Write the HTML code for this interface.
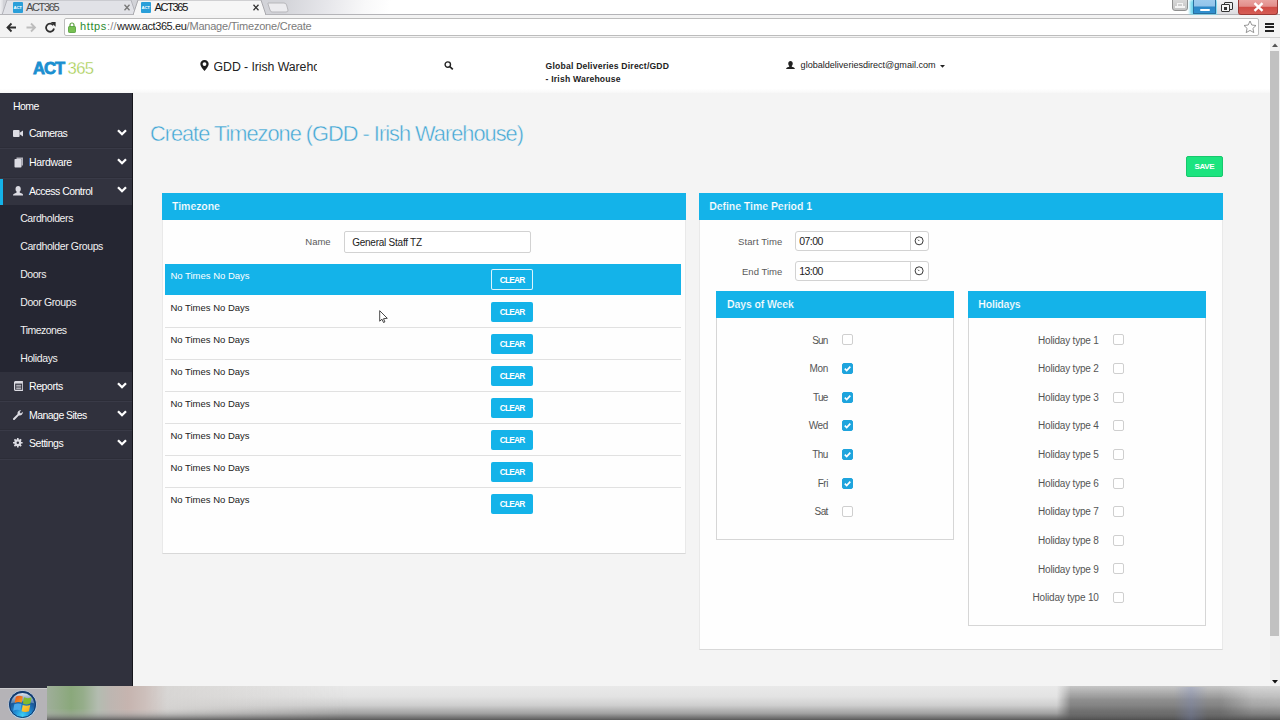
<!DOCTYPE html>
<html><head><meta charset="utf-8"><title>ACT365</title>
<style>
*{box-sizing:border-box;margin:0;padding:0}
html,body{width:1280px;height:720px;overflow:hidden;background:#f4f4f4;font-family:"Liberation Sans",sans-serif;color:#333}
div,span{white-space:nowrap}
.a,.t,svg{position:absolute}
.t{white-space:pre}
.panel{background:#fefefe;border:1px solid #e9e9e9;border-bottom-color:#d8d8d8}
.panel.in{border-color:#d6d6d6}
.ph{background:#14b3e9}
.inp{background:#fff;border:1px solid #d2d2d2;border-radius:2px}
.row{left:165px;width:516px;height:32px;border-bottom:1px solid #e1e1e1}
.clr{left:491px;width:42px;height:20px;background:#14b3e9;border-radius:2px}
.cb{width:11px;height:11px;border:1px solid #cfcfcf;border-radius:2px;background:#fff}
.cb.on{background:#1ea4dd;border-color:#1ea4dd}
.sep{left:0;width:132px;height:1px;background:#393a47;border-top:1px solid #2c2d38;height:2px}
</style></head><body>
<div class="a" style="left:0;top:0;width:1280px;height:15px;background:linear-gradient(100deg,#d2d3d8 0,#d2d3d8 22%,#e6e6ea 25.5%,#f8f8f9 28.5%,#fff 30.5%)"></div>
<div class="a" style="left:0;top:0;width:3px;height:14px;background:linear-gradient(90deg,#efeff2,#dcdde1)"></div>
<svg style="left:0;top:0" width="300" height="15" viewBox="0 0 300 15"><path d="M2 15 L7 0 L131 0 L136 15Z" fill="#e1e2e7" stroke="#b3b4ba" stroke-width="1"/><path d="M133 15 L138 0 L261 0 L266 15Z" fill="#f6f6f6" stroke="#a9a9ad" stroke-width="1"/><path d="M268 3 L284 3 Q286 3 286.6 5 L288 10 Q288.5 12 286 12 L272 12 Q270.5 12 270 10 L268 4Z" fill="#ececef" stroke="#b7b7bb" stroke-width="1"/></svg>
<div class="a" style="left:0;top:14px;width:1280px;height:1px;background:#b4b4b8"></div>
<div class="a" style="left:134px;top:14px;width:131px;height:1px;background:#f6f6f6"></div>
<div class="a" style="left:13px;top:2px;width:10px;height:10.5px;background:#2a9fd9;border-radius:1px"></div>
<div class="a" style="left:141px;top:2px;width:10px;height:10.5px;background:#2a9fd9;border-radius:1px"></div>
<svg style="left:124px;top:4px" width="6" height="7" viewBox="0 0 6 7"><path d="M0.5 0.8 L5.5 6.2 M5.5 0.8 L0.5 6.2" stroke="#777" stroke-width="1.3" fill="none"/></svg>
<svg style="left:252.5px;top:4px" width="6" height="7" viewBox="0 0 6 7"><path d="M0.5 0.8 L5.5 6.2 M5.5 0.8 L0.5 6.2" stroke="#333" stroke-width="1.3" fill="none"/></svg>
<div class="a" style="left:1172px;top:-3px;width:16px;height:14px;background:linear-gradient(#dcdcdc,#c4c4c4);border:1px solid #8f8f8f;border-radius:3px"></div>
<div class="a" style="left:1177px;top:3px;width:6px;height:3px;border:1px solid #f4f4f4;border-bottom:none"></div><div class="a" style="left:1175px;top:6px;width:10px;height:2px;background:#f4f4f4"></div>
<div class="a" style="left:1190px;top:0;width:28px;height:15px;background:#6fd6ee;filter:blur(1.5px)"></div>
<div class="a" style="left:1193px;top:0;width:23px;height:14px;background:linear-gradient(#9ccbee 0,#93c4ea 48%,#2c86c6 52%,#2f90cf 100%);border:1px solid #2a6f9f;border-top:none"></div>
<div class="a" style="left:1200px;top:8.5px;width:10px;height:2.5px;background:#fff;border-radius:1px"></div>
<div class="a" style="left:1217px;top:0;width:21px;height:14px;background:linear-gradient(#f2f2f4,#dcdce0)"></div>
<div class="a" style="left:1224px;top:1.5px;width:9px;height:8px;border:1.2px solid #333;background:#eee;border-radius:1px"></div><div class="a" style="left:1221px;top:4px;width:9px;height:8px;border:1.2px solid #333;background:#f4f4f4;border-radius:1px"></div><div class="a" style="left:1224px;top:7px;width:3px;height:2.5px;background:#333"></div>
<div class="a" style="left:1238px;top:0;width:40px;height:14.5px;background:linear-gradient(#e9a3a0 0,#e28d8a 45%,#cf4b45 52%,#d65d55 100%);border:1px solid #9b3a36;border-top:none;border-radius:0 0 3px 3px"></div>
<svg style="left:1253px;top:2px" width="11" height="10" viewBox="0 0 11 10"><path d="M1.5 1.2 L9.5 8.8 M9.5 1.2 L1.5 8.8" stroke="#fff" stroke-width="2.4" fill="none"/></svg>
<div class="a" style="left:0;top:15px;width:1280px;height:23px;background:#f3f3f3;border-bottom:1px solid #d0d0d0"></div>
<div class="a" style="left:63.5px;top:18px;width:1195px;height:17.5px;background:#fff;border:1px solid #bcbcbc;border-radius:2px"></div>
<svg style="left:6px;top:22px" width="52" height="11" viewBox="0 0 52 11"><path d="M10 5.5 L2 5.5 M5.5 1.5 L1.5 5.5 L5.5 9.5" stroke="#2f2f2f" stroke-width="1.8" fill="none"/><path d="M20.5 5.5 L28.5 5.5 M25 1.5 L29 5.5 L25 9.5" stroke="#bdbdbd" stroke-width="1.8" fill="none"/><path d="M47.2 3.2 A4 4 0 1 0 48 6.5" stroke="#2f2f2f" stroke-width="1.8" fill="none"/><path d="M44.8 0 L49.6 0 L49.6 4.8Z" fill="#2f2f2f"/></svg>
<svg style="left:68px;top:21.5px" width="8" height="11" viewBox="0 0 8 11"><path d="M2 5 V3 A2 2 0 0 1 6 3 V5" stroke="#5fa145" stroke-width="1.2" fill="none"/><rect x="0.5" y="4.5" width="7" height="6" rx="0.8" fill="#77c152" stroke="#4f9a37" stroke-width="0.8"/></svg>
<svg style="left:1243px;top:20px" width="14" height="14" viewBox="0 0 14 14"><path d="M7 1 L8.8 5 L13 5.5 L9.9 8.4 L10.8 12.6 L7 10.4 L3.2 12.6 L4.1 8.4 L1 5.5 L5.2 5Z" fill="#fff" stroke="#8a8a8a" stroke-width="0.9"/></svg>
<div class="a" style="left:1265px;top:22.5px;width:8.5px;height:2px;background:#222"></div><div class="a" style="left:1265px;top:26px;width:8.5px;height:2px;background:#222"></div><div class="a" style="left:1265px;top:29.5px;width:8.5px;height:2px;background:#222"></div>
<div class="a" style="left:0;top:38px;width:1270px;height:55px;background:linear-gradient(180deg,#fff 0,#fff 92%,#f7f7f7 100%)"></div>
<div class="a" style="left:1269.5px;top:38px;width:10.5px;height:648px;background:#f1f1f1"></div>
<div class="a" style="left:1270.3px;top:51px;width:8.5px;height:585px;background:#c1c1c1"></div>
<svg style="left:1272px;top:43px" width="6" height="4" viewBox="0 0 6 4"><path d="M0 4 L3 0.5 L6 4Z" fill="#555"/></svg>
<svg style="left:1272px;top:680.3px" width="6" height="3.5" viewBox="0 0 6 3.5"><path d="M0 0 L3 3.5 L6 0Z" fill="#111"/></svg>
<svg style="left:200.3px;top:60.3px" width="9" height="11" viewBox="0 0 9 11"><path d="M4.5 0 C2 0 0.3 1.8 0.3 4 C0.3 6.5 3 9 4.5 11 C6 9 8.7 6.5 8.7 4 C8.7 1.8 7 0 4.5 0Z M4.5 2.2 A1.9 1.9 0 1 1 4.5 6 A1.9 1.9 0 1 1 4.5 2.2Z" fill="#1d1d1d" fill-rule="evenodd"/></svg>
<svg style="left:443.6px;top:61px" width="10" height="9" viewBox="0 0 10 9"><circle cx="3.8" cy="3.6" r="2.7" stroke="#222" stroke-width="1.4" fill="none"/><path d="M5.8 5.6 L8.8 8.3" stroke="#222" stroke-width="1.7"/></svg>
<svg style="left:786.2px;top:60.6px" width="9" height="8.2" viewBox="0 0 8.6 8"><path d="M4.3 0 c-1.3 0 -2.2 1 -2.2 2.4 c0 1 .4 1.9 1 2.4 c0 .6 -.2 .9 -.8 1.1 c-1.400 .5 -2.3 .9 -2.3 2.100 h8.600 c0 -1.200 -.9 -1.600 -2.300 -2.100 c-.6 -.2 -.8 -.5 -.8 -1.100 c.6 -.5 1 -1.400 1 -2.400 c0 -1.400 -.9 -2.400 -2.200 -2.400z" fill="#222"/></svg>
<svg style="left:940.2px;top:65.2px" width="5" height="3" viewBox="0 0 5 3"><path d="M0 0 L5 0 L2.5 2.8Z" fill="#222"/></svg>
<div class="a" style="left:0;top:93px;width:133px;height:593px;background:#30313d;border-right:1px solid #16161c"></div>
<div class="a" style="left:0;top:178px;width:132px;height:27px;background:#32333f"></div>
<div class="a" style="left:0;top:205px;width:132px;height:167px;background:#252632"></div>
<div class="a" style="left:0;top:178px;width:3.3px;height:26.5px;background:#14b3e9"></div>
<div class="a sep" style="top:146.5px"></div>
<div class="a sep" style="top:177px"></div>
<div class="a sep" style="top:400px"></div>
<div class="a sep" style="top:428.5px"></div>
<div class="a sep" style="top:457.5px"></div>
<svg style="left:116.8px;top:128.9px" width="10" height="7" viewBox="0 0 10 7"><path d="M1 1.2 L5 5.2 L9 1.2" stroke="#fff" stroke-width="2.3" fill="none"/></svg>
<svg style="left:116.8px;top:157.8px" width="10" height="7" viewBox="0 0 10 7"><path d="M1 1.2 L5 5.2 L9 1.2" stroke="#fff" stroke-width="2.3" fill="none"/></svg>
<svg style="left:116.8px;top:186.2px" width="10" height="7" viewBox="0 0 10 7"><path d="M1 1.2 L5 5.2 L9 1.2" stroke="#fff" stroke-width="2.3" fill="none"/></svg>
<svg style="left:116.8px;top:381.5px" width="10" height="7" viewBox="0 0 10 7"><path d="M1 1.2 L5 5.2 L9 1.2" stroke="#fff" stroke-width="2.3" fill="none"/></svg>
<svg style="left:116.8px;top:410px" width="10" height="7" viewBox="0 0 10 7"><path d="M1 1.2 L5 5.2 L9 1.2" stroke="#fff" stroke-width="2.3" fill="none"/></svg>
<svg style="left:116.8px;top:438.5px" width="10" height="7" viewBox="0 0 10 7"><path d="M1 1.2 L5 5.2 L9 1.2" stroke="#fff" stroke-width="2.3" fill="none"/></svg>
<svg style="left:12.900px;top:130px" width="10" height="7" viewBox="0 0 10 7"><rect x="0" y="0" width="6.600" height="7" rx="0.900" fill="#dcdce3"/><path d="M6.600 2.800 L10 0.600 L10 6.400 L6.600 4.200Z" fill="#dcdce3"/></svg>
<svg style="left:13.5px;top:156.5px" width="10" height="11" viewBox="0 0 10 11"><path d="M2.5 0.5 H9 V8.5 H7.5 V2 H2.5Z" fill="#dcdce3" opacity=".75"/><rect x="0.5" y="2" width="7" height="8.5" rx="0.8" fill="#dcdce3"/></svg>
<svg style="left:13px;top:186px" width="10.3" height="9.6" viewBox="0 0 8.6 8"><path d="M4.3 0 c-1.3 0 -2.2 1 -2.2 2.4 c0 1 .4 1.9 1 2.4 c0 .6 -.2 .9 -.8 1.1 c-1.400 .5 -2.3 .9 -2.3 2.100 h8.600 c0 -1.200 -.9 -1.600 -2.300 -2.100 c-.6 -.2 -.8 -.5 -.8 -1.100 c.6 -.5 1 -1.400 1 -2.400 c0 -1.400 -.9 -2.400 -2.200 -2.400z" fill="#dcdce3"/></svg>
<svg style="left:13.700px;top:380.900px" width="9.400" height="10" viewBox="0 0 9.400 10"><rect x="0.600" y="0.600" width="8.200" height="8.800" rx="0.700" fill="none" stroke="#dcdce3" stroke-width="1.200"/><path d="M1 1.800 H8.400" stroke="#dcdce3" stroke-width="1.600"/><path d="M2.200 4.300 H7.200 M2.200 6 H7.200 M2.200 7.700 H7.200" stroke="#dcdce3" stroke-width="0.900"/></svg>
<svg style="left:13px;top:409.5px" width="10" height="10" viewBox="0 0 10 10"><path d="M1 9 L5.6 4.4" stroke="#dcdce3" stroke-width="2" stroke-linecap="round"/><path d="M9.600 1.800 L7.900 3.500 L6.500 2.100 L8.200 .4 A2.900 2.900 0 0 0 4.700 4.200 A2.900 2.900 0 0 0 5.800 5.300 A2.900 2.900 0 0 0 9.600 1.800Z" fill="#dcdce3"/></svg>
<svg style="left:13.2px;top:438.3px" width="9.6" height="9.6" viewBox="0 0 10 10"><circle cx="5" cy="5" r="2.6" fill="none" stroke="#dcdce3" stroke-width="2"/><path d="M5 0 V10 M0 5 H10 M1.5 1.500 L8.500 8.500 M8.500 1.500 L1.500 8.500" stroke="#dcdce3" stroke-width="1.700"/><circle cx="5" cy="5" r="1.300" fill="#30313d"/></svg>
<div class="a" style="left:1186px;top:156px;width:37px;height:20.5px;background:#1be47f;border:1px solid #17c86d;border-radius:2px"></div>
<div class="a panel" style="left:162px;top:193px;width:523.5px;height:360.5px"></div>
<div class="a ph" style="left:162px;top:193px;width:523.5px;height:26.5px"></div>
<div class="a inp" style="left:344px;top:231px;width:187px;height:22px"></div>
<div class="a row" style="top:264px;height:31.2px;background:#14b3e9;border:none"></div>
<div class="a clr" style="top:269px;height:20.5px;border:1px solid rgba(255,255,255,.85)"></div>
<div class="a row" style="top:296px"></div>
<div class="a clr" style="top:301.5px"></div>
<div class="a row" style="top:328px"></div>
<div class="a clr" style="top:333.5px"></div>
<div class="a row" style="top:360px"></div>
<div class="a clr" style="top:365.5px"></div>
<div class="a row" style="top:392px"></div>
<div class="a clr" style="top:397.5px"></div>
<div class="a row" style="top:424px"></div>
<div class="a clr" style="top:429.5px"></div>
<div class="a row" style="top:456px"></div>
<div class="a clr" style="top:461.5px"></div>
<div class="a row" style="top:488px;border:none"></div>
<div class="a clr" style="top:493.5px"></div>
<div class="a panel" style="left:699px;top:193px;width:524px;height:457px"></div>
<div class="a ph" style="left:699px;top:193px;width:524px;height:26.5px"></div>
<div class="a inp" style="left:795px;top:231px;width:133.5px;height:19.5px;border-radius:3px"></div>
<div class="a" style="left:910px;top:232px;width:1px;height:17.5px;background:#d2d2d2"></div>
<svg style="left:914px;top:235.6px" width="10" height="10" viewBox="0 0 10 10"><circle cx="5.100" cy="4.800" r="4" fill="none" stroke="#222" stroke-width="0.900"/><path d="M5.300 5 L4 3.700" stroke="#444" stroke-width="1" fill="none"/></svg>
<div class="a inp" style="left:795px;top:261px;width:133.5px;height:19.5px;border-radius:3px"></div>
<div class="a" style="left:910px;top:262px;width:1px;height:17.5px;background:#d2d2d2"></div>
<svg style="left:914px;top:265.6px" width="10" height="10" viewBox="0 0 10 10"><circle cx="5.100" cy="4.800" r="4" fill="none" stroke="#222" stroke-width="0.900"/><path d="M5.300 5 L4 3.700" stroke="#444" stroke-width="1" fill="none"/></svg>
<div class="a panel in" style="left:716px;top:291px;width:238px;height:248.5px"></div>
<div class="a ph" style="left:716px;top:291px;width:238px;height:26.5px"></div>
<div class="a panel in" style="left:967.5px;top:291px;width:238.5px;height:334.5px"></div>
<div class="a ph" style="left:967.5px;top:291px;width:238.5px;height:26.5px"></div>
<div class="a cb" style="left:842px;top:334.3px"></div>
<div class="a cb on" style="left:842px;top:362.9px"></div>
<svg style="left:842px;top:362.9px" width="11" height="11" viewBox="0 0 11 11"><path d="M2.8 5.600 L4.700 7.500 L8.300 3.600" stroke="#fff" stroke-width="1.700" fill="none"/></svg>
<div class="a cb on" style="left:842px;top:391.59999999999997px"></div>
<svg style="left:842px;top:391.59999999999997px" width="11" height="11" viewBox="0 0 11 11"><path d="M2.8 5.600 L4.700 7.500 L8.300 3.600" stroke="#fff" stroke-width="1.700" fill="none"/></svg>
<div class="a cb on" style="left:842px;top:420.2px"></div>
<svg style="left:842px;top:420.2px" width="11" height="11" viewBox="0 0 11 11"><path d="M2.8 5.600 L4.700 7.500 L8.300 3.600" stroke="#fff" stroke-width="1.700" fill="none"/></svg>
<div class="a cb on" style="left:842px;top:448.9px"></div>
<svg style="left:842px;top:448.9px" width="11" height="11" viewBox="0 0 11 11"><path d="M2.8 5.600 L4.700 7.500 L8.300 3.600" stroke="#fff" stroke-width="1.700" fill="none"/></svg>
<div class="a cb on" style="left:842px;top:477.5px"></div>
<svg style="left:842px;top:477.5px" width="11" height="11" viewBox="0 0 11 11"><path d="M2.8 5.600 L4.700 7.500 L8.300 3.600" stroke="#fff" stroke-width="1.700" fill="none"/></svg>
<div class="a cb" style="left:842px;top:506.09999999999997px"></div>
<div class="a cb" style="left:1112.7px;top:334.3px"></div>
<div class="a cb" style="left:1112.7px;top:362.9px"></div>
<div class="a cb" style="left:1112.7px;top:391.59999999999997px"></div>
<div class="a cb" style="left:1112.7px;top:420.2px"></div>
<div class="a cb" style="left:1112.7px;top:448.9px"></div>
<div class="a cb" style="left:1112.7px;top:477.5px"></div>
<div class="a cb" style="left:1112.7px;top:506.09999999999997px"></div>
<div class="a cb" style="left:1112.7px;top:534.7px"></div>
<div class="a cb" style="left:1112.7px;top:563.4000000000001px"></div>
<div class="a cb" style="left:1112.7px;top:592.0px"></div>
<div class="a" style="left:0;top:685.7px;width:1280px;height:35px;background:linear-gradient(180deg,#e9e9e9 0,#e3e3e3 30%,#cfcfcf 55%,#a2a2a2 78%,#6a6a6a 93%,#4c4c4c 100%)"></div>
<div class="a" style="left:47px;top:685.7px;width:300px;height:35px;background:linear-gradient(90deg,#9fae9a 0,#8aa87b 8%,#95ad8a 12%,#b3bcb0 17%,#bdb6b1 21%,#c6b4af 27%,#cdc0bc 33%,rgba(214,212,210,.9) 40%,rgba(222,222,222,0) 100%);-webkit-mask-image:linear-gradient(180deg,#000 0,#000 65%,transparent 100%);mask-image:linear-gradient(180deg,#000 0,#000 65%,transparent 100%)"></div>
<div class="a" style="left:1050px;top:685.7px;width:230px;height:35px;background:linear-gradient(180deg,rgba(110,110,110,.28) 0,rgba(95,95,95,.62) 40%,rgba(70,70,70,.6) 75%,rgba(60,60,60,.35) 100%);-webkit-mask-image:linear-gradient(90deg,transparent 0,transparent 3%,#000 9%,#000 74%,rgba(0,0,0,.55) 88%,rgba(0,0,0,.5) 100%);mask-image:linear-gradient(90deg,transparent 0,transparent 3%,#000 9%,#000 74%,rgba(0,0,0,.55) 88%,rgba(0,0,0,.5) 100%)"></div>
<div class="a" style="left:1174px;top:687px;width:34px;height:33px;background:linear-gradient(90deg,rgba(120,135,190,0) 0,rgba(120,135,190,.3) 50%,rgba(120,135,190,0) 100%)"></div>
<div class="a" style="left:0;top:685px;width:47px;height:3px;background:#30313d"></div>
<div class="a" style="left:0;top:688px;width:47px;height:32px;background:#b5b3b7"></div>
<svg style="left:7.500px;top:689.500px" width="29" height="29" viewBox="0 0 29 29"><defs><radialGradient id="og" cx="50%" cy="88%" r="75%"><stop offset="0" stop-color="#3fd0f5"/><stop offset="0.35" stop-color="#1f8fd6"/><stop offset="0.7" stop-color="#1c5c9e"/><stop offset="1" stop-color="#143d73"/></radialGradient><linearGradient id="oh" x1="0" y1="0" x2="0" y2="1"><stop offset="0" stop-color="#eef3f8" stop-opacity=".95"/><stop offset="1" stop-color="#b9cbe0" stop-opacity=".35"/></linearGradient><linearGradient id="fr" x1="0" y1="0" x2="1" y2="1"><stop offset="0" stop-color="#e8491c"/><stop offset="1" stop-color="#f7a91e"/></linearGradient><linearGradient id="fy" x1="0" y1="0" x2="1" y2="1"><stop offset="0" stop-color="#fbd43a"/><stop offset="1" stop-color="#f4a81c"/></linearGradient></defs><circle cx="14.500" cy="14.500" r="14" fill="url(#og)" stroke="#dfe6ee" stroke-width="0.800"/><circle cx="14.500" cy="14.500" r="13" fill="none" stroke="#123a6e" stroke-width="1"/><path d="M2.600 13.500 A12 12 0 0 1 26.400 13.500 Q14.500 9.500 2.600 13.500Z" fill="url(#oh)"/><path d="M7.800 6.800 Q11 5 14.800 6.600 L13.700 12.700 Q10.500 11.300 6.600 12.900Z" fill="url(#fr)"/><path d="M16 7.300 Q19.500 9 23.600 7.200 L22.400 13.600 Q18.800 15.200 14.900 13.500Z" fill="#7fba30"/><path d="M6.300 14.300 Q10 12.600 13.500 14.100 L12.400 20.400 Q9 19 5.200 20.700Z" fill="#4aa8ea"/><path d="M14.700 14.900 Q18.300 16.500 22.200 14.900 L21 21.200 Q17.300 22.800 13.600 21.200Z" fill="url(#fy)"/></svg>
<div class="a" style="left:0;top:688px;width:47px;height:1px;background:#cbcbcd"></div>
<svg style="left:378.500px;top:310.300px" width="10" height="14" viewBox="0 0 10 14"><path d="M0.700 0.700 L0.700 11.200 L3 9.200 L4.500 12.500 L5.900 11.900 L4.500 8.700 L8.300 8.300Z" fill="#fff" stroke="#1c1c1c" stroke-width="0.800"/></svg>
<div class="t" style="left:13.50px;top:3px;font-size:4.3px;line-height:9px;color:#fff;font-weight:700;letter-spacing:-0.177px;">ACT</div>
<div class="t" style="left:141.50px;top:3px;font-size:4.3px;line-height:9px;color:#fff;font-weight:700;letter-spacing:-0.177px;">ACT</div>
<div class="t" style="left:25.90px;top:-1px;font-size:11px;line-height:16px;color:#4a4a4a;letter-spacing:-1.338px;">ACT365</div>
<div class="t" style="left:154.60px;top:-1px;font-size:11px;line-height:16px;color:#111;letter-spacing:-1.338px;">ACT365</div>
<div class="t" style="left:80.10px;top:18px;font-size:11px;line-height:16px;color:#2b8a2e;letter-spacing:0.587px;">https</div>
<div class="t" style="left:107.10px;top:18px;font-size:11px;line-height:16px;color:#8a8a8a;letter-spacing:0.131px;">://</div>
<div class="t" style="left:117.10px;top:18px;font-size:11px;line-height:16px;color:#1c1c1c;letter-spacing:-0.409px;">www.act365.eu</div>
<div class="t" style="left:186.60px;top:18px;font-size:11px;line-height:16px;color:#7b7b7b;letter-spacing:-0.215px;">/Manage/Timezone/Create</div>
<div class="t" style="left:33.00px;top:57px;font-size:16.6px;line-height:23px;color:#1b8fd0;font-weight:700;letter-spacing:-0.924px;-webkit-text-stroke:0.8px #1b8fd0;">ACT</div>
<div class="t" style="left:67.50px;top:57px;font-size:16.6px;line-height:23px;color:#a3cb4c;letter-spacing:-0.595px;-webkit-text-stroke:0.3px #fff;">365</div>
<div class="t" style="left:213.60px;top:58px;font-size:12.3px;line-height:18px;color:#222;letter-spacing:-0.065px;width:103.5px;overflow:hidden;">GDD - Irish Warehouse</div>
<div class="t" style="left:545.60px;top:59px;font-size:8.6px;line-height:14px;color:#222;font-weight:700;letter-spacing:0.201px;">Global Deliveries Direct/GDD</div>
<div class="t" style="left:545.60px;top:72px;font-size:8.6px;line-height:14px;color:#222;font-weight:700;letter-spacing:0.194px;">- Irish Warehouse</div>
<div class="t" style="left:800.60px;top:58px;font-size:9.1px;line-height:14px;color:#222;letter-spacing:-0.019px;">globaldeliveriesdirect@gmail.com</div>
<div class="t" style="left:13.10px;top:98px;font-size:10.5px;line-height:16px;color:#fff;letter-spacing:-0.576px;">Home</div>
<div class="t" style="left:29.00px;top:125px;font-size:10.5px;line-height:16px;color:#fff;letter-spacing:-0.632px;">Cameras</div>
<div class="t" style="left:29.00px;top:154px;font-size:10.5px;line-height:16px;color:#fff;letter-spacing:-0.338px;">Hardware</div>
<div class="t" style="left:29.00px;top:183px;font-size:10.5px;line-height:16px;color:#fff;letter-spacing:-0.519px;">Access Control</div>
<div class="t" style="left:20.20px;top:210px;font-size:10.5px;line-height:16px;color:#f1f1f1;letter-spacing:-0.400px;">Cardholders</div>
<div class="t" style="left:20.20px;top:238px;font-size:10.5px;line-height:16px;color:#f1f1f1;letter-spacing:-0.382px;">Cardholder Groups</div>
<div class="t" style="left:20.20px;top:266px;font-size:10.5px;line-height:16px;color:#f1f1f1;letter-spacing:-0.448px;">Doors</div>
<div class="t" style="left:20.20px;top:294px;font-size:10.5px;line-height:16px;color:#f1f1f1;letter-spacing:-0.391px;">Door Groups</div>
<div class="t" style="left:20.20px;top:322px;font-size:10.5px;line-height:16px;color:#f1f1f1;letter-spacing:-0.526px;">Timezones</div>
<div class="t" style="left:20.20px;top:350px;font-size:10.5px;line-height:16px;color:#f1f1f1;letter-spacing:-0.371px;">Holidays</div>
<div class="t" style="left:29.00px;top:378px;font-size:10.5px;line-height:16px;color:#fff;letter-spacing:-0.425px;">Reports</div>
<div class="t" style="left:29.00px;top:407px;font-size:10.5px;line-height:16px;color:#fff;letter-spacing:-0.541px;">Manage Sites</div>
<div class="t" style="left:29.00px;top:435px;font-size:10.5px;line-height:16px;color:#fff;letter-spacing:-0.460px;">Settings</div>
<div class="t" style="left:149.90px;top:119px;font-size:21.8px;line-height:29px;color:#41a6d5;letter-spacing:-1.006px;-webkit-text-stroke:0.45px #f4f4f4;">Create Timezone (GDD - Irish Warehouse)</div>
<div class="t" style="left:1194.60px;top:160px;font-size:8px;line-height:13px;color:#fff;font-weight:700;letter-spacing:-0.429px;">SAVE</div>
<div class="t" style="left:172.10px;top:198px;font-size:10.5px;line-height:16px;color:#fff;font-weight:700;letter-spacing:-0.058px;-webkit-text-stroke:0.2px #14b3e9;">Timezone</div>
<div class="t" style="left:305.29px;top:234px;font-size:9.5px;line-height:15px;color:#5a5a5a;letter-spacing:-0.012px;">Name</div>
<div class="t" style="left:352.20px;top:235px;font-size:10px;line-height:15px;color:#222;letter-spacing:-0.243px;">General Staff TZ</div>
<div class="t" style="left:170.40px;top:268px;font-size:9.5px;line-height:15px;color:#fff;">No Times No Days</div>
<div class="t" style="left:499.80px;top:273px;font-size:8.4px;line-height:14px;color:#fff;font-weight:700;letter-spacing:-0.858px;">CLEAR</div>
<div class="t" style="left:170.40px;top:300px;font-size:9.5px;line-height:15px;color:#222;">No Times No Days</div>
<div class="t" style="left:499.80px;top:305px;font-size:8.4px;line-height:14px;color:#fff;font-weight:700;letter-spacing:-0.858px;">CLEAR</div>
<div class="t" style="left:170.40px;top:332px;font-size:9.5px;line-height:15px;color:#222;">No Times No Days</div>
<div class="t" style="left:499.80px;top:337px;font-size:8.4px;line-height:14px;color:#fff;font-weight:700;letter-spacing:-0.858px;">CLEAR</div>
<div class="t" style="left:170.40px;top:364px;font-size:9.5px;line-height:15px;color:#222;">No Times No Days</div>
<div class="t" style="left:499.80px;top:369px;font-size:8.4px;line-height:14px;color:#fff;font-weight:700;letter-spacing:-0.858px;">CLEAR</div>
<div class="t" style="left:170.40px;top:396px;font-size:9.5px;line-height:15px;color:#222;">No Times No Days</div>
<div class="t" style="left:499.80px;top:401px;font-size:8.4px;line-height:14px;color:#fff;font-weight:700;letter-spacing:-0.858px;">CLEAR</div>
<div class="t" style="left:170.40px;top:428px;font-size:9.5px;line-height:15px;color:#222;">No Times No Days</div>
<div class="t" style="left:499.80px;top:433px;font-size:8.4px;line-height:14px;color:#fff;font-weight:700;letter-spacing:-0.858px;">CLEAR</div>
<div class="t" style="left:170.40px;top:460px;font-size:9.5px;line-height:15px;color:#222;">No Times No Days</div>
<div class="t" style="left:499.80px;top:465px;font-size:8.4px;line-height:14px;color:#fff;font-weight:700;letter-spacing:-0.858px;">CLEAR</div>
<div class="t" style="left:170.40px;top:492px;font-size:9.5px;line-height:15px;color:#222;">No Times No Days</div>
<div class="t" style="left:499.80px;top:497px;font-size:8.4px;line-height:14px;color:#fff;font-weight:700;letter-spacing:-0.858px;">CLEAR</div>
<div class="t" style="left:709.20px;top:198px;font-size:10.5px;line-height:16px;color:#fff;font-weight:700;letter-spacing:-0.046px;-webkit-text-stroke:0.2px #14b3e9;">Define Time Period 1</div>
<div class="t" style="left:738.05px;top:234px;font-size:9.5px;line-height:15px;color:#5a5a5a;letter-spacing:0.106px;">Start Time</div>
<div class="t" style="left:742.01px;top:264px;font-size:9.5px;line-height:15px;color:#5a5a5a;letter-spacing:0.021px;">End Time</div>
<div class="t" style="left:799.20px;top:233px;font-size:10.5px;line-height:16px;color:#222;letter-spacing:-0.551px;">07:00</div>
<div class="t" style="left:799.20px;top:263px;font-size:10.5px;line-height:16px;color:#222;letter-spacing:-0.551px;">13:00</div>
<div class="t" style="left:727.10px;top:296px;font-size:10.5px;line-height:16px;color:#fff;font-weight:700;letter-spacing:-0.130px;-webkit-text-stroke:0.2px #14b3e9;">Days of Week</div>
<div class="t" style="left:978.30px;top:296px;font-size:10.5px;line-height:16px;color:#fff;font-weight:700;letter-spacing:-0.195px;-webkit-text-stroke:0.2px #14b3e9;">Holidays</div>
<div class="t" style="left:812.20px;top:333px;font-size:10px;line-height:15px;color:#555;letter-spacing:-0.799px;">Sun</div>
<div class="t" style="left:809.55px;top:361px;font-size:10px;line-height:15px;color:#555;letter-spacing:-0.301px;">Mon</div>
<div class="t" style="left:813.02px;top:390px;font-size:10px;line-height:15px;color:#555;letter-spacing:-0.750px;">Tue</div>
<div class="t" style="left:808.72px;top:418px;font-size:10px;line-height:15px;color:#555;letter-spacing:-0.356px;">Wed</div>
<div class="t" style="left:812.15px;top:447px;font-size:10px;line-height:15px;color:#555;letter-spacing:-0.494px;">Thu</div>
<div class="t" style="left:817.67px;top:476px;font-size:10px;line-height:15px;color:#555;letter-spacing:-0.469px;">Fri</div>
<div class="t" style="left:814.60px;top:504px;font-size:10px;line-height:15px;color:#555;letter-spacing:-0.606px;">Sat</div>
<div class="t" style="left:1038.00px;top:333px;font-size:10px;line-height:15px;color:#555;letter-spacing:-0.191px;">Holiday type 1</div>
<div class="t" style="left:1038.00px;top:361px;font-size:10px;line-height:15px;color:#555;letter-spacing:-0.191px;">Holiday type 2</div>
<div class="t" style="left:1038.00px;top:390px;font-size:10px;line-height:15px;color:#555;letter-spacing:-0.191px;">Holiday type 3</div>
<div class="t" style="left:1038.00px;top:418px;font-size:10px;line-height:15px;color:#555;letter-spacing:-0.191px;">Holiday type 4</div>
<div class="t" style="left:1038.00px;top:447px;font-size:10px;line-height:15px;color:#555;letter-spacing:-0.191px;">Holiday type 5</div>
<div class="t" style="left:1038.00px;top:476px;font-size:10px;line-height:15px;color:#555;letter-spacing:-0.191px;">Holiday type 6</div>
<div class="t" style="left:1038.00px;top:504px;font-size:10px;line-height:15px;color:#555;letter-spacing:-0.191px;">Holiday type 7</div>
<div class="t" style="left:1038.00px;top:533px;font-size:10px;line-height:15px;color:#555;letter-spacing:-0.191px;">Holiday type 8</div>
<div class="t" style="left:1038.00px;top:562px;font-size:10px;line-height:15px;color:#555;letter-spacing:-0.191px;">Holiday type 9</div>
<div class="t" style="left:1032.51px;top:590px;font-size:10px;line-height:15px;color:#555;letter-spacing:-0.182px;">Holiday type 10</div>
</body></html>
